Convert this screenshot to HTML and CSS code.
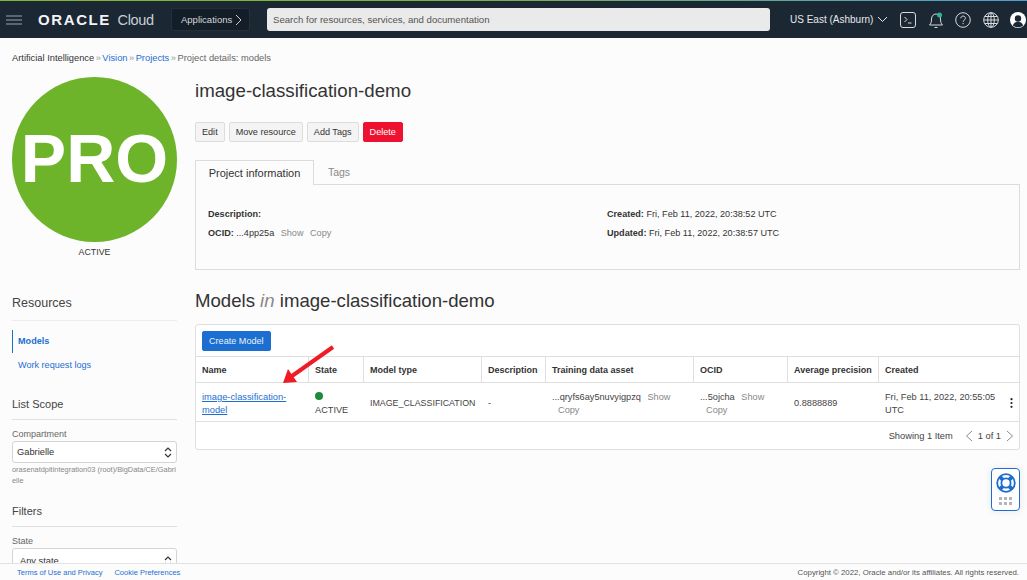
FILE: index.html
```html
<!DOCTYPE html>
<html lang="en">
<head>
    <meta charset="UTF-8">
    <meta name="viewport" content="width=device-width, initial-scale=1.0">
    <title>image-classification-demo - Oracle Cloud</title>
    <link rel="stylesheet" href="styles.css">
</head>
<body>
    <header class="topbar">
        <svg class="menu-icon" width="16" height="10" viewBox="0 0 16 10"><path d="M0 1h16M0 5h16M0 9h16" stroke="#9aa3ad" stroke-width="1.2"/></svg>
        <div class="brand"><span class="brand-oracle">ORACLE</span> <span class="brand-cloud">Cloud</span></div>
        <div class="apps">Applications
            <svg width="7" height="12" viewBox="0 0 7 12"><path d="M1 1l5 5-5 5" fill="none" stroke="#c9ced3" stroke-width="1"/></svg>
        </div>
        <div class="search">Search for resources, services, and documentation</div>
        <div class="region">US East (Ashburn)
            <svg width="11" height="7" viewBox="0 0 11 7"><path d="M1 1l4.500 4.500L10 1" fill="none" stroke="#e6e8ea" stroke-width="1"/></svg>
        </div>
        <div class="top-icons">
            <svg width="16" height="16" viewBox="0 0 16 16"><rect x=".5" y=".5" width="15" height="15" rx="2.500" fill="none" stroke="#d8dbde"/><path d="M4.500 5l2.500 2.500L4.500 10M8 11h3.500" fill="none" stroke="#d8dbde"/></svg>
            <svg width="16" height="18" viewBox="0 0 16 18"><path d="M1.500 14c1.500-1.500 2-3 2-6 0-3 2-5 4.500-5s4.500 2 4.500 5c0 3 .5 4.500 2 6zM6.500 16.500h3" fill="none" stroke="#d8dbde"/><circle cx="11.500" cy="4" r="2.500" fill="#2bb5a0"/></svg>
            <svg width="16" height="16" viewBox="0 0 16 16"><circle cx="8" cy="8" r="7.300" fill="none" stroke="#d8dbde"/><path d="M5.800 6.300c0-3 4.600-3 4.600 0 0 1.800-2.300 1.800-2.300 3.500M8.100 11v1.200" fill="none" stroke="#d8dbde"/></svg>
            <svg width="16" height="16" viewBox="0 0 16 16"><g fill="none" stroke="#d8dbde"><circle cx="8" cy="8" r="7.300"/><ellipse cx="8" cy="8" rx="3.300" ry="7.300"/><path d="M8 .7v14.600M.7 8h14.600M1.800 4.500h12.400M1.800 11.500h12.400"/></g></svg>
            <svg width="16" height="16" viewBox="0 0 16 16"><circle cx="8" cy="8" r="8" fill="#fff"/><circle cx="8" cy="6.500" r="3.200" fill="#1b2733"/><path d="M2.800 13.500c1-3 3-3.800 5.200-3.800s4.200.8 5.200 3.800c-1.500 1.200-3.200 1.800-5.200 1.800s-3.700-.6-5.200-1.800z" fill="#1b2733"/></svg>
        </div>
    </header>

    <nav class="breadcrumbs">
        <span class="crumb-dark">Artificial Intelligence</span> <span class="sep">»</span>
        <a href="#">Vision</a> <span class="sep">»</span>
        <a href="#">Projects</a> <span class="sep">»</span>
        Project details: models
    </nav>

    <div class="page">
        <aside class="sidebar">
            <div class="badge-wrap">
                <div class="project-badge">PRO</div>
                <div class="badge-state">ACTIVE</div>
            </div>

            <h3 class="side-title side-resources">Resources</h3>
            <ul class="side-menu">
                <li class="active"><a href="#">Models</a></li>
                <li><a href="#">Work request logs</a></li>
            </ul>

            <h3 class="side-title side-scope">List Scope</h3>
            <label class="field-label">Compartment</label>
            <div class="select">Gabrielle
                <svg width="8" height="13" viewBox="0 0 8 13"><path d="M1 5l3-3 3 3M1 8l3 3 3-3" fill="none" stroke="#333" stroke-width="1.200"/></svg>
            </div>
            <p class="hint">orasenatdpltintegration03 (root)/BigData/CE/Gabri<br>elle</p>

            <h3 class="side-title side-filters">Filters</h3>
            <label class="field-label">State</label>
            <div class="select select-state">Any state
                <svg width="8" height="13" viewBox="0 0 8 13"><path d="M1 5l3-3 3 3M1 8l3 3 3-3" fill="none" stroke="#333" stroke-width="1.200"/></svg>
            </div>
        </aside>

        <main class="content">
            <h1 class="page-title">image-classification-demo</h1>
            <div class="actions">
                <button class="btn">Edit</button>
                <button class="btn">Move resource</button>
                <button class="btn">Add Tags</button>
                <button class="btn btn-danger">Delete</button>
            </div>

            <div class="tabs">
                <div class="tab tab-active">Project information</div>
                <div class="tab">Tags</div>
            </div>
            <section class="info-panel">
                <div class="info-col">
                    <p><b>Description:</b></p>
                    <p><b>OCID:</b> ...4pp25a <span class="muted-link">Show</span> <span class="muted-link">Copy</span></p>
                </div>
                <div class="info-col">
                    <p><b>Created:</b> Fri, Feb 11, 2022, 20:38:52 UTC</p>
                    <p><b>Updated:</b> Fri, Feb 11, 2022, 20:38:57 UTC</p>
                </div>
            </section>

            <h2 class="section-title">Models <em>in</em> image-classification-demo</h2>

            <section class="table-card">
                <div class="table-toolbar"><button class="btn btn-primary">Create Model</button></div>
                <table class="models">
                    <colgroup>
                        <col class="c-name"><col class="c-state"><col class="c-type"><col class="c-desc">
                        <col class="c-asset"><col class="c-ocid"><col class="c-prec"><col class="c-created">
                    </colgroup>
                    <thead>
                        <tr>
                            <th>Name</th><th>State</th><th>Model type</th><th>Description</th>
                            <th>Training data asset</th><th>OCID</th><th>Average precision</th><th>Created</th>
                        </tr>
                    </thead>
                    <tbody>
                        <tr>
                            <td><a class="model-link" href="#">image-classification-<br>model</a></td>
                            <td><span class="dot"></span><br>ACTIVE</td>
                            <td class="type-cell">IMAGE_CLASSIFICATION</td>
                            <td>-</td>
                            <td>...qryfs6ay5nuvyigpzq <span class="muted-link">Show</span><br><span class="muted-link copy-line">Copy</span></td>
                            <td>...5ojcha <span class="muted-link">Show</span><br><span class="muted-link copy-line">Copy</span></td>
                            <td>0.8888889</td>
                            <td class="created-cell">Fri, Feb 11, 2022, 20:55:05<br>UTC
                                <svg class="kebab" width="3" height="10" viewBox="0 0 3 10"><circle cx="1.500" cy="1.200" r="1.100" fill="#222"/><circle cx="1.500" cy="5" r="1.100" fill="#222"/><circle cx="1.500" cy="8.800" r="1.100" fill="#222"/></svg>
                            </td>
                        </tr>
                    </tbody>
                </table>
                <div class="table-footer">
                    <span>Showing 1 Item</span>
                    <div class="pager">
                        <svg width="8" height="12" viewBox="0 0 8 12"><path d="M7 1L1.500 6 7 11" fill="none" stroke="#8a8a8a"/></svg>
                        <span>1 of 1</span>
                        <svg width="8" height="12" viewBox="0 0 8 12"><path d="M1 1l5.500 5L1 11" fill="none" stroke="#8a8a8a"/></svg>
                    </div>
                </div>
                <svg class="red-arrow" width="56" height="44" viewBox="0 0 56 44"><path d="M53 2L12 31" stroke="#f01c24" stroke-width="4"/><path d="M3 38L8 24 17 37z" fill="#f01c24"/></svg>
            </section>
        </main>
    </div>

    <div class="help-widget">
        <svg width="20" height="20" viewBox="0 0 20 20"><g fill="none" stroke="#1c6fd0"><circle cx="10" cy="10" r="8.800" stroke-width="1.800"/><circle cx="10" cy="10" r="4.600" stroke-width="1.800"/><path d="M3.700 3.700l3 3M16.300 3.700l-3 3M3.700 16.300l3-3M16.300 16.300l-3-3" stroke-width="4"/></g></svg>
        <div class="help-dots"><i></i><i></i><i></i><i></i><i></i><i></i></div>
    </div>

    <footer class="footer">
        <div class="footer-links"><a href="#">Terms of Use and Privacy</a><a href="#">Cookie Preferences</a></div>
        <div class="copyright">Copyright © 2022, Oracle and/or its affiliates. All rights reserved.</div>
    </footer>
</body>
</html>
```

FILE: styles.css
```css
html, body {
    height: 100%;
}

body {
    font-family: "Liberation Sans", Arial, sans-serif;
    font-size: 9.100px;
    margin: 0;
    background-color: #fcfcfc;
    color: #333;
    overflow: hidden;
}

a {
    color: #1c6fd0;
    text-decoration: none;
}

/* top bar */
.topbar {
    display: flex;
    align-items: center;
    height: 38px;
    box-sizing: border-box;
    background-color: #1b2733;
    border-top: 1px solid #7fb53a;
    border-image: linear-gradient(90deg, #7fb53a, #7fb53a 40%, #4a9fd8) 1;
    color: #e6e8ea;
}

.menu-icon {
    margin-left: 6px;
}

.brand {
    margin-left: 16px;
    width: 133px;
    white-space: nowrap;
    color: #f2f3f4;
}

.brand-oracle {
    font-size: 15px;
    font-weight: bold;
    letter-spacing: 1.600px;
}

.brand-cloud {
    margin-left: 4px;
    font-size: 14.500px;
    letter-spacing: -0.300px;
    color: #c9ced3;
}

.apps {
    display: flex;
    align-items: center;
    gap: 3px;
    box-sizing: border-box;
    width: 79px;
    height: 23px;
    padding-left: 9px;
    background-color: #141e28;
    border: 1px solid #232f3b;
    border-radius: 2px;
    color: #d5d8db;
    font-size: 9.500px;
}

.search {
    display: flex;
    align-items: center;
    box-sizing: border-box;
    width: 503px;
    height: 23px;
    margin-left: 17px;
    padding-left: 6px;
    background-color: #eaeaea;
    border-radius: 3px;
    color: #555;
    font-size: 9.600px;
}

.region {
    display: flex;
    align-items: center;
    gap: 4px;
    margin-left: 20px;
    font-size: 10px;
    white-space: nowrap;
}

.top-icons {
    display: flex;
    align-items: center;
    gap: 11.500px;
    margin-left: 12px;
}

/* breadcrumbs */
.breadcrumbs {
    padding: 14px 12px 0;
    height: 13px;
    color: #666;
    font-size: 9.300px;
    line-height: 13px;
}

.crumb-dark {
    color: #333;
}

.sep {
    margin: 0 -1.100px;
    color: #999;
}

/* page columns */
.page {
    display: flex;
    gap: 18px;
    padding: 0 7px 0 12px;
}

.sidebar {
    flex: 0 0 165px;
}

.badge-wrap {
    padding-top: 12px;
    text-align: center;
}

.project-badge {
    height: 165px;
    border-radius: 50%;
    background-color: #6db42a;
    color: #fff;
    font-size: 68px;
    font-weight: bold;
    line-height: 163px;
    text-align: center;
}

.badge-state {
    margin-top: 5px;
    height: 12px;
    font-size: 8.800px;
    line-height: 11px;
    color: #333;
}

.side-title {
    margin: 0;
    padding-bottom: 8px;
    border-bottom: 1px solid #dfdfdf;
    font-size: 11px;
    font-weight: normal;
    line-height: 14px;
    color: #444;
}

.side-resources {
    margin-top: 37px;
    padding-bottom: 10px;
    border-bottom-color: #ececec;
    font-size: 12.500px;
}

.side-scope {
    margin-top: 20px;
}

.side-filters {
    margin-top: 18px;
}

.side-menu {
    list-style: none;
    margin: 9px 0 0;
    padding: 0;
    font-size: 9.100px;
}

.side-menu li {
    height: 23px;
    line-height: 23px;
    padding-left: 6px;
    margin-bottom: 1px;
}

.side-menu .active {
    border-left: 1px solid #1c6fd0;
    padding-left: 5px;
    font-weight: bold;
}

.field-label {
    display: block;
    margin-top: 8px;
    height: 13px;
    line-height: 13px;
    font-size: 9px;
    color: #666;
}

.select {
    display: flex;
    align-items: center;
    justify-content: space-between;
    box-sizing: border-box;
    height: 22px;
    padding: 0 4px 0 4px;
    background-color: #fff;
    border: 1px solid #d5d5d5;
    border-radius: 3px;
    font-size: 9.300px;
    color: #333;
}

.select-state {
    height: 26px;
    padding-left: 7px;
}

.hint {
    margin: 1px 0 0;
    font-size: 7.400px;
    line-height: 11px;
    color: #888;
    white-space: nowrap;
}

.content {
    flex: 1;
    min-width: 0;
}

.page-title {
    margin: 14px 0 0;
    font-size: 18.700px;
    font-weight: normal;
    line-height: 24px;
    color: #333;
}

.actions {
    display: flex;
    gap: 4px;
    margin-top: 19px;
}

.btn {
    height: 20px;
    padding: 0 6px;
    background-color: #f4f4f4;
    border: 1px solid #dcdcdc;
    border-radius: 2px;
    font-family: inherit;
    font-size: 9.100px;
    color: #333;
}

.btn-danger {
    background-color: #ee1230;
    border-color: #ee1230;
    color: #fff;
}

.btn-primary {
    background-color: #1c6fd0;
    border-color: #1c6fd0;
    color: #e8f1fb;
}

/* tabs */
.tabs {
    display: flex;
    margin-top: 18px;
    height: 25px;
    box-sizing: border-box;
    border-bottom: 1px solid #dcdcdc;
}

.tab {
    width: 50px;
    text-align: center;
    line-height: 24px;
    font-size: 10.500px;
    color: #888;
}

.tab-active {
    box-sizing: border-box;
    width: 119px;
    height: 25px;
    background-color: #fcfcfc;
    border: 1px solid #dcdcdc;
    border-bottom: none;
    color: #333;
    font-size: 11px;
}

.info-panel {
    display: flex;
    box-sizing: border-box;
    height: 85px;
    padding: 23px 12px 0;
    border: 1px solid #dcdcdc;
    border-top: none;
}

.info-col {
    flex: 0 0 399px;
}

.info-col p {
    margin: 0 0 6px;
    line-height: 13px;
    font-size: 9.100px;
}

.muted-link {
    margin-left: 4px;
    color: #888;
}

.section-title {
    margin: 19px 0 0;
    font-size: 18.600px;
    font-weight: normal;
    line-height: 24px;
    color: #333;
}

.section-title em {
    color: #888;
}

/* table */
.table-card {
    position: relative;
    margin-top: 11px;
    box-sizing: border-box;
    height: 126px;
    background-color: #fff;
    border: 1px solid #dfdfdf;
    border-radius: 3px;
}

.table-toolbar {
    height: 31px;
    padding: 6px 0 0 6px;
    box-sizing: border-box;
}

.models {
    width: 824px;
    table-layout: fixed;
    border-collapse: separate;
    border-spacing: 0;
    font-size: 9.200px;
}

.c-name { width: 113px; }
.c-state { width: 55px; }
.c-type { width: 118px; }
.c-desc { width: 64px; }
.c-asset { width: 148px; }
.c-ocid { width: 94px; }
.c-prec { width: 91px; }
.c-created { width: 141px; }

.models th {
    height: 27px;
    padding: 0 0 0 6px;
    box-sizing: border-box;
    border-top: 1px solid #dfdfdf;
    border-bottom: 1px solid #dfdfdf;
    border-right: 1px solid #dfdfdf;
    font-size: 9px;
    text-align: left;
    font-weight: bold;
    color: #333;
    white-space: nowrap;
}

.models th:last-child {
    border-right: none;
}

.models td {
    height: 39px;
    padding: 3px 0 0 6px;
    box-sizing: border-box;
    border-bottom: 1px solid #dfdfdf;
    line-height: 13px;
    color: #444;
    white-space: nowrap;
}

.models .type-cell {
    font-size: 8.850px;
}

.model-link {
    color: #1c6fd0;
    text-decoration: underline;
    font-size: 9.300px;
}

.dot {
    display: inline-block;
    width: 8px;
    height: 8px;
    border-radius: 50%;
    background-color: #1e8a3c;
}

.copy-line {
    margin-left: 6px;
}

.created-cell {
    position: relative;
}

.kebab {
    position: absolute;
    right: 7px;
    top: 15px;
}

.table-footer {
    display: flex;
    justify-content: flex-end;
    align-items: center;
    gap: 12px;
    height: 26px;
    padding: 1px 5px 0 0;
    box-sizing: border-box;
    font-size: 9.300px;
    color: #444;
}

.pager {
    display: flex;
    align-items: center;
    gap: 5px;
}

.red-arrow {
    position: absolute;
    left: 84px;
    top: 20px;
}

/* help widget */
.help-widget {
    position: fixed;
    left: 991px;
    top: 468px;
    box-sizing: border-box;
    width: 29px;
    height: 43px;
    padding-top: 4px;
    background-color: #fff;
    border: 1px solid #1c6fd0;
    border-radius: 4px;
    text-align: center;
    box-shadow: 0 0 8px rgba(0, 0, 0, 0.08);
}

.help-widget svg {
    display: block;
    margin: 0 auto;
}

.help-dots {
    display: grid;
    grid-template-columns: repeat(3, 3px);
    gap: 2px;
    justify-content: center;
    margin-top: 4px;
}

.help-dots i {
    height: 3px;
    background-color: #b5b5b5;
}

/* footer */
.footer {
    position: fixed;
    left: 0;
    right: 0;
    bottom: 0;
    display: flex;
    justify-content: space-between;
    align-items: center;
    box-sizing: border-box;
    height: 17px;
    padding: 1px 8px 0 17px;
    background-color: #fcfcfc;
    border-top: 1px solid #e2e2e2;
    font-size: 7.500px;
}

.footer-links {
    display: flex;
    gap: 12px;
}

.copyright {
    color: #555;
    font-size: 7.800px;
}
```
